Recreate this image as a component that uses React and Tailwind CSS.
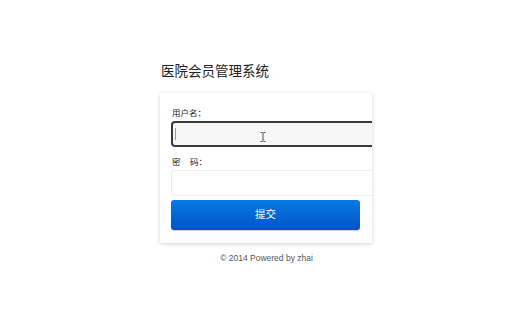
import React from 'react';

const App = () => {
  return (
    <div className="w-[520px] h-[325px] bg-white overflow-hidden" style={{ fontFamily: '"Liberation Sans", "Noto Sans CJK SC", sans-serif' }}>
      <div className="ml-[160px] w-[212px] pt-[62px]">
        <h1 className="text-[13.5px] leading-[20px] text-[#222] pl-[1px] mb-[11px]">医院会员管理系统</h1>

        <div className="bg-white overflow-hidden rounded-[2px] shadow-[0_1px_4px_rgba(0,0,0,0.18)] pl-[11px] pt-[14px] pb-[13px]">
          <label className="block text-[8.5px] leading-[12px] text-[#222] pl-[1px] mb-[2px]">用户名：</label>
          <div className="relative w-[210px] h-[26px] rounded-[4px] border-2 border-[#3a3a3a] bg-[#f7f7f7]">
            <span className="absolute left-[2px] top-[5px] w-px h-[12px] bg-[#999]" />
            <svg className="absolute left-[87px] top-[9px]" width="6" height="10" viewBox="0 0 6 10">
              <path d="M0.5 0.5h2M3.5 0.5h2M3 0.5v9M0.5 9.5h2M3.5 9.5h2" stroke="#555" strokeWidth="1" fill="none" />
            </svg>
          </div>

          <label className="block text-[8.5px] leading-[12px] text-[#222] pl-[1px] mt-[9px] mb-[2px]">密&nbsp;&nbsp;&nbsp;&nbsp;码：</label>
          <div className="w-[210px] h-[26px] border border-[#eee] rounded-[3px] bg-white" />

          <button className="mt-[4px] w-[189px] h-[30px] rounded-[3px] bg-gradient-to-b from-[#0b7ae6] to-[#0253c4] text-white text-[10.5px] shadow-[0_1px_1px_rgba(0,0,0,0.2)]">
            提交
          </button>
        </div>

        <p className="mt-[9px] text-center text-[8.5px] text-[#555] pl-[1px]">© 2014 Powered by zhai</p>
      </div>
    </div>
  );
};

export default App;
